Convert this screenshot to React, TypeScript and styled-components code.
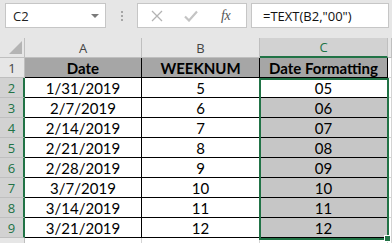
import React from "react";
import styled, { createGlobalStyle } from "styled-components";

const Global = createGlobalStyle`
  html, body { margin: 0; padding: 0; background: #e6e6e6; }
  body { width: 392px; height: 243px; overflow: hidden; }
`;

const Page = styled.div`
  width: 392px;
  height: 243px;
  display: flex;
  flex-direction: column;
  background: #e6e6e6;
  overflow: hidden;
`;

const Toolbar = styled.div`
  height: 38px;
  flex: none;
  display: flex;
  align-items: flex-start;
  padding: 3px 3px 0 5px;
  box-sizing: border-box;
`;

const NameBox = styled.div`
  width: 101px;
  height: 25px;
  box-sizing: border-box;
  background: #fff;
  border: 1px solid #c6c6c6;
  display: flex;
  align-items: center;
  justify-content: space-between;
  padding: 0 6px 0 7px;
  font-family: "Open Sans", "Liberation Sans", sans-serif;
  font-size: 13px;
  color: #222;
`;

const Caret = styled.span`
  width: 0;
  height: 0;
  border-left: 4px solid transparent;
  border-right: 4px solid transparent;
  border-top: 4px solid #7a7a7a;
`;

const Grip = styled.div`
  width: 31px;
  height: 25px;
  display: flex;
  flex-direction: column;
  align-items: center;
  justify-content: center;
  gap: 2px;
  span {
    width: 2px;
    height: 2px;
    background: #a6a6a6;
  }
`;

const FxBox = styled.div`
  width: 110px;
  height: 25px;
  box-sizing: border-box;
  background: #fff;
  border: 1px solid #c6c6c6;
  display: flex;
  align-items: center;
  padding: 0 0 0 13px;
  gap: 21px;
`;

const FxLabel = styled.span`
  font-family: "Liberation Serif", serif;
  font-style: italic;
  font-size: 14px;
  color: #555;
  letter-spacing: -0.5px;
  margin-left: 2px;
`;

const FormulaInput = styled.div`
  flex: 1;
  margin-left: 4px;
  height: 25px;
  box-sizing: border-box;
  background: #fff;
  border: 1px solid #c6c6c6;
  display: flex;
  align-items: center;
  padding-left: 11px;
  font-family: "Open Sans", "Liberation Sans", sans-serif;
  font-size: 13px;
  color: #111;
`;

const Sheet = styled.div`
  position: relative;
  flex: 1;
  display: grid;
  grid-template-columns: 25px 117px 118px 128px 1fr;
  grid-auto-rows: 20px;
  background: #fff;
`;

type CellProps = { $bg?: string; $color?: string; $bold?: boolean; $line?: string };

const HeadCell = styled.div<{ $sel?: boolean }>`
  box-sizing: border-box;
  background: ${(p) => (p.$sel ? "#d2d2d2" : "#e6e6e6")};
  border-right: 1px solid #bfbfbf;
  border-bottom: ${(p) => (p.$sel ? "2px solid #217346" : "1px solid #bfbfbf")};
  display: flex;
  align-items: center;
  justify-content: center;
  font-family: "Open Sans", "Liberation Sans", sans-serif;
  font-size: 13px;
  color: ${(p) => (p.$sel ? "#217346" : "#444")};
`;

const CornerCell = styled.div`
  box-sizing: border-box;
  background: #e6e6e6;
  border-right: 1px solid #bfbfbf;
  border-bottom: 1px solid #bfbfbf;
  display: flex;
  align-items: flex-end;
  justify-content: flex-end;
  padding: 0 2px 3px 0;
`;

const CornerTri = styled.span`
  width: 0;
  height: 0;
  border-left: 13px solid transparent;
  border-bottom: 13px solid #b4b4b4;
`;

const RowHead = styled.div<{ $sel?: boolean }>`
  box-sizing: border-box;
  background: ${(p) => (p.$sel ? "#d2d2d2" : "#e6e6e6")};
  border-right: ${(p) => (p.$sel ? "2px solid #217346" : "1px solid #bfbfbf")};
  border-bottom: 1px solid #bfbfbf;
  display: flex;
  align-items: center;
  justify-content: center;
  font-family: "Open Sans", "Liberation Sans", sans-serif;
  font-size: 13px;
  color: ${(p) => (p.$sel ? "#217346" : "#444")};
`;

const Cell = styled.div<CellProps>`
  box-sizing: border-box;
  background: ${(p) => p.$bg || "#fff"};
  border-right: 1px solid ${(p) => p.$line || "#000"};
  border-bottom: 1px solid ${(p) => p.$line || "#000"};
  display: flex;
  align-items: center;
  justify-content: center;
  font-family: "Lato", "Liberation Sans", sans-serif;
  font-size: 15px;
  font-weight: ${(p) => (p.$bold ? 700 : 400)};
  color: ${(p) => p.$color || "#000"};
  white-space: nowrap;
`;

const Selection = styled.div`
  position: absolute;
  left: 259px;
  top: 40px;
  width: 130px;
  height: 162px;
  box-sizing: border-box;
  border: 2px solid #217346;
  pointer-events: none;
`;

const FillHandle = styled.div`
  position: absolute;
  right: -4px;
  bottom: -4px;
  width: 5px;
  height: 5px;
  background: #217346;
  border: 1px solid #fff;
`;

const rows = [
  ["1/31/2019", "5", "05"],
  ["2/7/2019", "6", "06"],
  ["2/14/2019", "7", "07"],
  ["2/21/2019", "8", "08"],
  ["2/28/2019", "9", "09"],
  ["3/7/2019", "10", "10"],
  ["3/14/2019", "11", "11"],
  ["3/21/2019", "12", "12"],
];

const CrossIcon = () => (
  <svg width="12" height="12" viewBox="0 0 12 12">
    <path d="M1 1 L11 11 M11 1 L1 11" stroke="#b3b3b3" strokeWidth="1.3" fill="none" />
  </svg>
);

const CheckIcon = () => (
  <svg width="14" height="12" viewBox="0 0 14 12">
    <path d="M1 6.5 L5 10.5 L13 1.5" stroke="#c4c4c4" strokeWidth="2.2" fill="none" />
  </svg>
);

export default function App() {
  return (
    <Page>
      <Global />
      <Toolbar>
        <NameBox>
          <span>C2</span>
          <Caret />
        </NameBox>
        <Grip>
          <span />
          <span />
          <span />
        </Grip>
        <FxBox>
          <CrossIcon />
          <CheckIcon />
          <FxLabel>fx</FxLabel>
        </FxBox>
        <FormulaInput>=TEXT(B2,"00")</FormulaInput>
      </Toolbar>
      <Sheet>
        <CornerCell>
          <CornerTri />
        </CornerCell>
        <HeadCell>A</HeadCell>
        <HeadCell>B</HeadCell>
        <HeadCell $sel>C</HeadCell>
        <HeadCell />

        <RowHead>1</RowHead>
        <Cell $bg="#a6a6a6" $bold>Date</Cell>
        <Cell $bg="#a6a6a6" $bold>WEEKNUM</Cell>
        <Cell $bg="#a6a6a6" $bold>Date Formatting</Cell>
        <Cell $line="#d4d4d4" />

        {rows.map((r, i) => (
          <React.Fragment key={i}>
            <RowHead $sel>{i + 2}</RowHead>
            <Cell>{r[0]}</Cell>
            <Cell>{r[1]}</Cell>
            <Cell $bg={i === 0 ? "#fff" : "#c6c6c6"}>{r[2]}</Cell>
            <Cell $line="#d4d4d4" />
          </React.Fragment>
        ))}

        <RowHead />
        <Cell $line="#d4d4d4" />
        <Cell $line="#d4d4d4" />
        <Cell $line="#d4d4d4" />
        <Cell $line="#d4d4d4" />

        <Selection>
          <FillHandle />
        </Selection>
      </Sheet>
    </Page>
  );
}
